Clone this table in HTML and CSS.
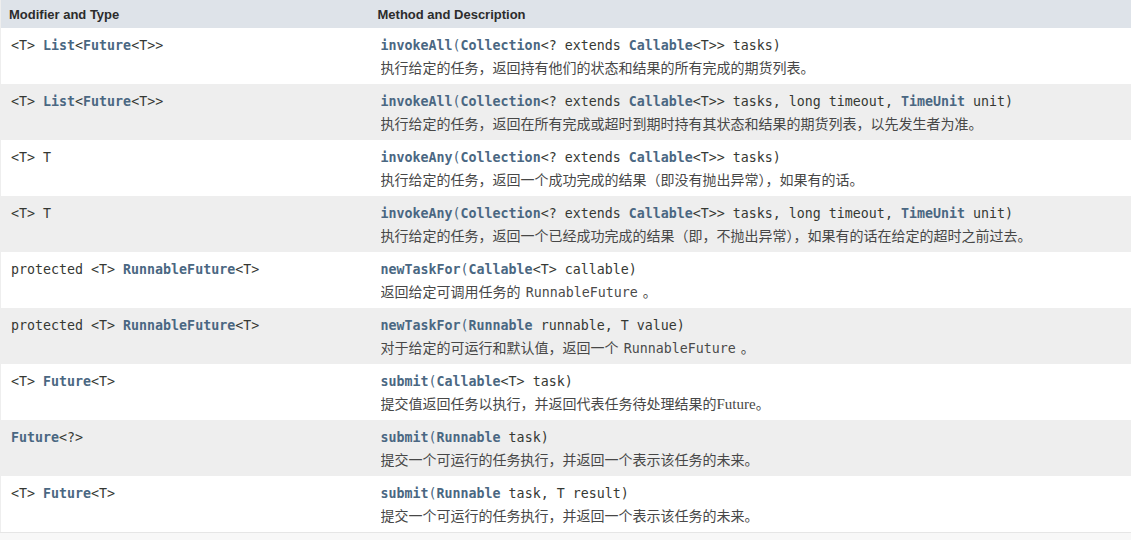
FILE: index.html
```html
<!DOCTYPE html>
<html lang="zh">
<head>
<meta charset="utf-8">
<title>ExecutorService methods</title>
<link rel="stylesheet" href="styles.css">
</head>
<body>
<table class="summary">
  <colgroup><col class="c1"><col class="c2"></colgroup>
  <thead>
    <tr><th class="h1">Modifier and Type</th><th class="h2">Method and Description</th></tr>
  </thead>
  <tbody>
    <tr class="alt-a">
      <td class="mod"><code>&lt;T&gt; <b class="lk">List</b>&lt;<b class="lk">Future</b>&lt;T&gt;&gt;</code></td>
      <td class="meth"><div class="sig"><code><b class="lk">invokeAll</b><span class="lp">(</span><b class="lk">Collection</b>&lt;? extends <b class="lk">Callable</b>&lt;T&gt;&gt; tasks)</code></div><div class="desc">执行给定的任务，返回持有他们的状态和结果的所有完成的期货列表。</div></td>
    </tr>
    <tr class="alt-b">
      <td class="mod"><code>&lt;T&gt; <b class="lk">List</b>&lt;<b class="lk">Future</b>&lt;T&gt;&gt;</code></td>
      <td class="meth"><div class="sig"><code><b class="lk">invokeAll</b><span class="lp">(</span><b class="lk">Collection</b>&lt;? extends <b class="lk">Callable</b>&lt;T&gt;&gt; tasks, long timeout, <b class="lk">TimeUnit</b> unit)</code></div><div class="desc">执行给定的任务，返回在所有完成或超时到期时持有其状态和结果的期货列表，以先发生者为准。</div></td>
    </tr>
    <tr class="alt-a">
      <td class="mod"><code>&lt;T&gt; T</code></td>
      <td class="meth"><div class="sig"><code><b class="lk">invokeAny</b><span class="lp">(</span><b class="lk">Collection</b>&lt;? extends <b class="lk">Callable</b>&lt;T&gt;&gt; tasks)</code></div><div class="desc">执行给定的任务，返回一个成功完成的结果（即没有抛出异常），如果有的话。</div></td>
    </tr>
    <tr class="alt-b">
      <td class="mod"><code>&lt;T&gt; T</code></td>
      <td class="meth"><div class="sig"><code><b class="lk">invokeAny</b><span class="lp">(</span><b class="lk">Collection</b>&lt;? extends <b class="lk">Callable</b>&lt;T&gt;&gt; tasks, long timeout, <b class="lk">TimeUnit</b> unit)</code></div><div class="desc">执行给定的任务，返回一个已经成功完成的结果（即，不抛出异常），如果有的话在给定的超时之前过去。</div></td>
    </tr>
    <tr class="alt-a">
      <td class="mod"><code>protected &lt;T&gt; <b class="lk">RunnableFuture</b>&lt;T&gt;</code></td>
      <td class="meth"><div class="sig"><code><b class="lk">newTaskFor</b><span class="lp">(</span><b class="lk">Callable</b>&lt;T&gt; callable)</code></div><div class="desc">返回给定可调用任务的 <code class="inl">RunnableFuture</code> 。</div></td>
    </tr>
    <tr class="alt-b">
      <td class="mod"><code>protected &lt;T&gt; <b class="lk">RunnableFuture</b>&lt;T&gt;</code></td>
      <td class="meth"><div class="sig"><code><b class="lk">newTaskFor</b><span class="lp">(</span><b class="lk">Runnable</b> runnable, T value)</code></div><div class="desc">对于给定的可运行和默认值，返回一个 <code class="inl">RunnableFuture</code> 。</div></td>
    </tr>
    <tr class="alt-a">
      <td class="mod"><code>&lt;T&gt; <b class="lk">Future</b>&lt;T&gt;</code></td>
      <td class="meth"><div class="sig"><code><b class="lk">submit</b><span class="lp">(</span><b class="lk">Callable</b>&lt;T&gt; task)</code></div><div class="desc">提交值返回任务以执行，并返回代表任务待处理结果的<span class="serif">Future</span>。</div></td>
    </tr>
    <tr class="alt-b">
      <td class="mod"><code><b class="lk">Future</b>&lt;?&gt;</code></td>
      <td class="meth"><div class="sig"><code><b class="lk">submit</b><span class="lp">(</span><b class="lk">Runnable</b> task)</code></div><div class="desc">提交一个可运行的任务执行，并返回一个表示该任务的未来。</div></td>
    </tr>
    <tr class="alt-a">
      <td class="mod"><code>&lt;T&gt; <b class="lk">Future</b>&lt;T&gt;</code></td>
      <td class="meth"><div class="sig"><code><b class="lk">submit</b><span class="lp">(</span><b class="lk">Runnable</b> task, T result)</code></div><div class="desc">提交一个可运行的任务执行，并返回一个表示该任务的未来。</div></td>
    </tr>
  </tbody>
</table>
</body>
</html>
```
FILE: styles.css
```css
html, body {
  margin: 0;
  padding: 0;
  background: #f8f8f8;
}
.summary {
  width: 1131px;
  border-collapse: collapse;
  table-layout: fixed;
  border-left: 1px solid #eeeeee;
}
.c1 { width: 370px; }
.c2 { width: 761px; }
.summary th {
  background: #dee3e9;
  font-family: "Liberation Sans", Arial, sans-serif;
  font-weight: bold;
  font-size: 13px;
  color: #2c2c2c;
  text-align: left;
  height: 28px;
  padding: 0;
  vertical-align: middle;
}
.h1 { padding-left: 8px !important; }
.h2 { padding-left: 7px !important; }
.summary tbody tr { height: 56px; }
.summary tbody tr:last-child { border-bottom: 1px solid #e6e6e6; }
.alt-a { background: #ffffff; }
.alt-b { background: #eeeeee; }
.summary td {
  vertical-align: top;
  padding: 6px 3px 6px 10px;
  height: 44px;
  box-sizing: content-box;
}
code {
  font-family: "DejaVu Sans Mono", "Liberation Mono", monospace;
  font-size: 13.3px;
  color: #353833;
}
.mod { line-height: 22px; }
.sig { line-height: 22px; height: 22px; white-space: nowrap; overflow: hidden; }
.lk { color: #4a6782; font-weight: bold; }
.lp { color: #4a6782; }
.desc {
  font-family: "Noto Sans CJK SC", "Microsoft YaHei", sans-serif;
  font-size: 14px;
  line-height: 22px;
  height: 22px;
  overflow: hidden;
  color: #474747;
  white-space: nowrap;
}
.inl { color: #4a4a4a; font-size: 13.3px; line-height: 1; margin: 0 2px; }
.serif { font-family: "Liberation Serif", "Times New Roman", serif; font-size: 15px; color: #474747; line-height: 1; }
```
